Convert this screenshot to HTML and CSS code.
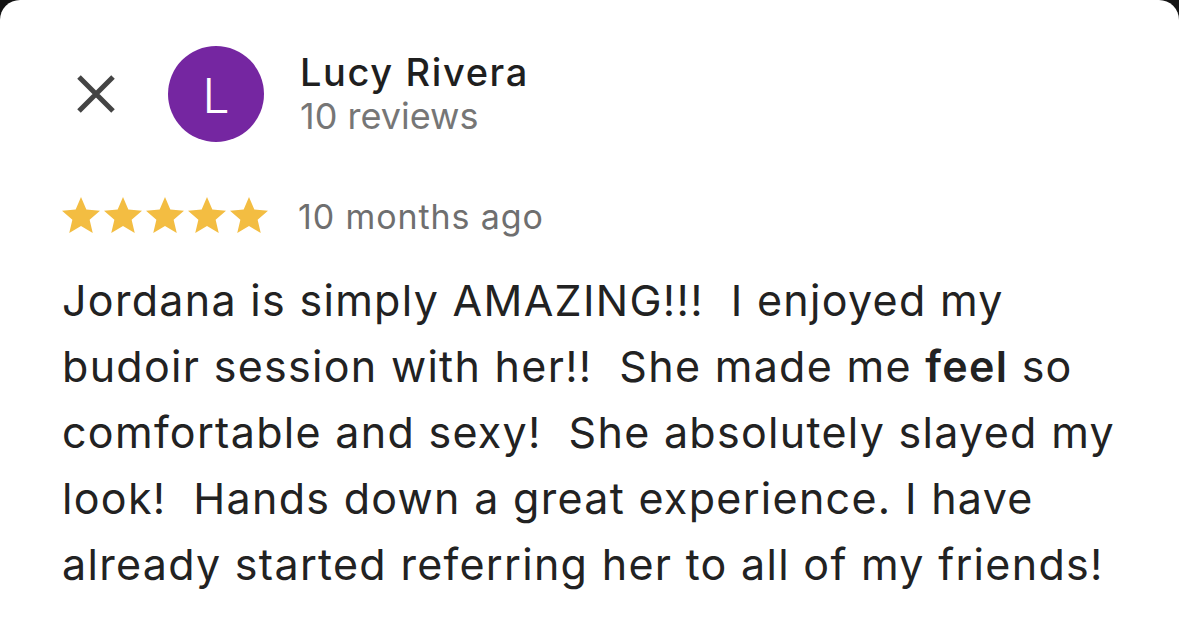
FILE: index.html
```html
<!DOCTYPE html>
<html>
<head>
<meta charset="utf-8">
<link rel="stylesheet" href="styles.css">
</head>
<body>
<div class="card">
  <div class="header">
    <svg class="close" viewBox="0 0 40 40" width="40" height="40">
      <path d="M3 3 L37 37 M37 3 L3 37" stroke="#444" stroke-width="5" stroke-linecap="butt"/>
    </svg>
    <div class="avatar">L</div>
    <div class="who">
      <div class="name">Lucy Rivera</div>
      <div class="count">10 reviews</div>
    </div>
  </div>
  <div class="meta">
    <div class="stars">
      <svg class="star" viewBox="2 2 20 20"><path d="M12 17.27L18.18 21l-1.64-7.03L22 9.24l-7.19-.61L12 2 9.19 8.63 2 9.24l5.46 4.730L5.82 21z"/></svg>
      <svg class="star" viewBox="2 2 20 20"><path d="M12 17.27L18.18 21l-1.64-7.03L22 9.24l-7.19-.61L12 2 9.19 8.63 2 9.24l5.46 4.730L5.82 21z"/></svg>
      <svg class="star" viewBox="2 2 20 20"><path d="M12 17.27L18.18 21l-1.64-7.03L22 9.24l-7.19-.61L12 2 9.19 8.63 2 9.24l5.46 4.730L5.82 21z"/></svg>
      <svg class="star" viewBox="2 2 20 20"><path d="M12 17.27L18.18 21l-1.64-7.03L22 9.24l-7.19-.61L12 2 9.19 8.63 2 9.24l5.46 4.730L5.82 21z"/></svg>
      <svg class="star" viewBox="2 2 20 20"><path d="M12 17.27L18.18 21l-1.64-7.03L22 9.24l-7.19-.61L12 2 9.19 8.63 2 9.24l5.46 4.730L5.82 21z"/></svg>
    </div>
    <span class="when">10 months ago</span>
  </div>
  <p class="review">Jordana is simply AMAZING!!!  I enjoyed my
budoir session with her!!  She made me <b>feel</b> so
comfortable and sexy!  She absolutely slayed my
look!  Hands down a great experience. I have
already started referring her to all of my friends!</p>
</div>
</body>
</html>
```
FILE: styles.css
```css
html, body {
  margin: 0;
  padding: 0;
  background: #141414;
}
body {
  font-family: Inter, "Noto Sans", "Liberation Sans", sans-serif;
  overflow: hidden;
}
.card {
  background: #ffffff;
  height: 621px;
  border-radius: 20px 20px 0 0;
  padding: 46px 0 0 62px;
  box-sizing: border-box;
}
.header {
  display: flex;
  align-items: center;
}
.close {
  display: block;
  margin-left: 14px;
}
.avatar {
  width: 96px;
  height: 96px;
  border-radius: 50%;
  background: #7526a1;
  color: #fff;
  font-size: 48px;
  font-weight: 300;
  display: flex;
  align-items: center;
  justify-content: center;
  margin-left: 52px;
  padding-top: 2px;
  box-sizing: border-box;
}
.who {
  margin-left: 36px;
}
.name {
  font-size: 38px;
  line-height: 44px;
  font-weight: 500;
  letter-spacing: 1.6px;
  color: #1f1f1f;
}
.count {
  font-size: 36px;
  line-height: 44px;
  color: #767676;
}
.meta {
  display: flex;
  align-items: center;
  margin-top: 54px;
  height: 40px;
}
.stars {
  display: flex;
  gap: 4px;
}
.star {
  width: 38px;
  height: 38px;
  fill: #f3bd42;
  display: block;
}
.when {
  font-size: 34px;
  letter-spacing: 0.9px;
  color: #6f6f6f;
  margin-left: 30px;
}
.review {
  margin: 31px 0 0 0;
  font-size: 43px;
  line-height: 66px;
  letter-spacing: 1.3px;
  color: #222222;
  white-space: pre-wrap;
}
.review b {
  font-weight: 600;
}
```
